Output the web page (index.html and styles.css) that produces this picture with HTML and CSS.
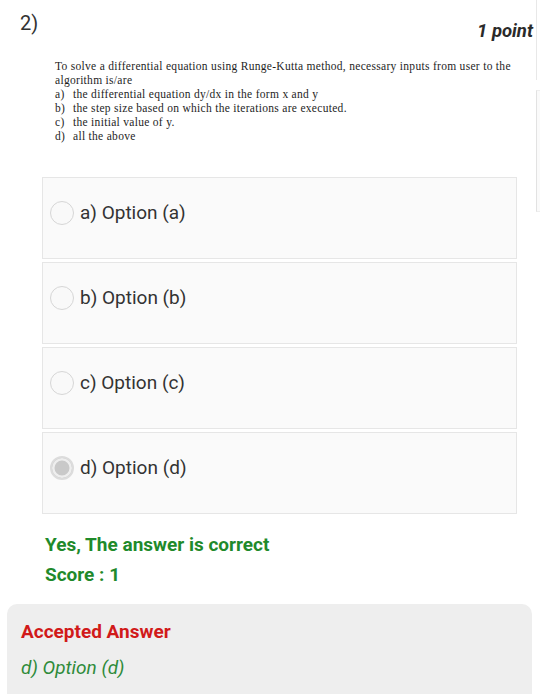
FILE: index.html
```html
<!DOCTYPE html>
<html lang="en">
<head>
<meta charset="utf-8">
<title>Question 2</title>
<link rel="stylesheet" href="styles.css">
</head>
<body>
<div class="page">
  <main class="main">
    <header class="q-head">
      <span class="q-num">2)</span>
      <span class="q-points">1 point</span>
    </header>
    <div class="q-text">
      <p class="q-line">To solve a differential equation using Runge-Kutta method, necessary inputs from user to the algorithm is/are</p>
      <div class="q-item"><span class="q-lbl">a)</span><span>the differential equation dy/dx in the form x and y</span></div>
      <div class="q-item"><span class="q-lbl">b)</span><span>the step size based on which the iterations are executed.</span></div>
      <div class="q-item"><span class="q-lbl">c)</span><span>the initial value of y.</span></div>
      <div class="q-item"><span class="q-lbl">d)</span><span>all the above</span></div>
    </div>
    <div class="options">
      <div class="opt"><div class="opt-row"><span class="radio"></span><span class="opt-label">a) Option (a)</span></div></div>
      <div class="opt"><div class="opt-row"><span class="radio"></span><span class="opt-label">b) Option (b)</span></div></div>
      <div class="opt"><div class="opt-row"><span class="radio"></span><span class="opt-label">c) Option (c)</span></div></div>
      <div class="opt"><div class="opt-row"><span class="radio radio-on"></span><span class="opt-label">d) Option (d)</span></div></div>
    </div>
    <div class="result">
      <div class="result-line">Yes, The answer is correct</div>
      <div class="result-line">Score : 1</div>
    </div>
    <section class="accepted">
      <div class="acc-title">Accepted Answer</div>
      <div class="acc-value">d) Option (d)</div>
    </section>
  </main>
  <aside class="edge">
    <div class="edge-top"></div>
    <div class="edge-box"></div>
  </aside>
</div>
</body>
</html>
```
FILE: styles.css
```css
html, body {
  margin: 0;
  padding: 0;
  background: #ffffff;
}
body {
  font-family: Roboto, "Noto Sans", Arial, sans-serif;
  color: #333333;
  overflow: hidden;
}
.page {
  display: flex;
  width: 540px;
  height: 694px;
  overflow: hidden;
}
.main {
  width: 536px;
  flex: none;
}
.edge {
  flex: 1;
  display: flex;
  flex-direction: column;
}
.edge-top {
  height: 80px;
  border-left: 1px solid #e8e8e8;
}
.edge-box {
  margin-top: 10px;
  height: 120px;
  border-left: 1px solid #e2e2e2;
  border-top: 1px solid #eeeeee;
  border-bottom: 1px solid #eeeeee;
  background: #fafafa;
}
.q-head {
  display: flex;
  justify-content: space-between;
  align-items: flex-start;
  padding: 11px 3px 0 20px;
}
.q-num {
  font-size: 20px;
  line-height: 24px;
  color: #333333;
}
.q-points {
  margin-top: 9px;
  font-size: 18.5px;
  line-height: 22px;
  font-weight: bold;
  font-style: italic;
  color: #2a2a2a;
}
.q-text {
  margin: 17px 0 0 55px;
  width: 470px;
  font-family: "Liberation Serif", "Times New Roman", serif;
  font-size: 11.5px;
  letter-spacing: 0.3px;
  line-height: 14px;
  color: #1e1e1e;
}
.q-line {
  margin: 0;
}
.q-item {
  display: flex;
}
.q-lbl {
  width: 18px;
  flex: none;
}
.options {
  margin: 34px 0 0 42px;
  width: 475px;
  display: flex;
  flex-direction: column;
  gap: 3px;
}
.opt {
  box-sizing: border-box;
  height: 82px;
  border: 1px solid #e6e6e6;
  background: #fafafa;
  padding: 23px 0 0 7px;
}
.opt-row {
  display: flex;
  align-items: center;
  gap: 6px;
  height: 24px;
}
.radio {
  box-sizing: border-box;
  width: 24px;
  height: 24px;
  border-radius: 50%;
  border: 1.5px solid #d6d6d6;
  background: #f9f9f9;
  flex: none;
}
.radio-on {
  border: 2px solid #dcdcdc;
  background: #c9c9c9;
  box-shadow: inset 0 0 0 2.5px #eeeeee;
}
.opt-label {
  font-size: 19px;
  line-height: 24px;
  color: #333333;
}
.result {
  margin: 16px 0 0 45px;
  color: #1f8a2b;
  font-size: 19px;
  font-weight: bold;
  line-height: 30px;
}
.accepted {
  margin: 14px 0 0 7px;
  width: 525px;
  height: 120px;
  box-sizing: border-box;
  padding: 17px 14px 0 14px;
  background: #eeeeee;
  border-radius: 10px;
}
.acc-title {
  font-size: 19px;
  line-height: 22px;
  font-weight: bold;
  color: #d11a1a;
}
.acc-value {
  margin-top: 14px;
  font-size: 19px;
  line-height: 22px;
  font-style: italic;
  color: #2e8b3a;
}
```
